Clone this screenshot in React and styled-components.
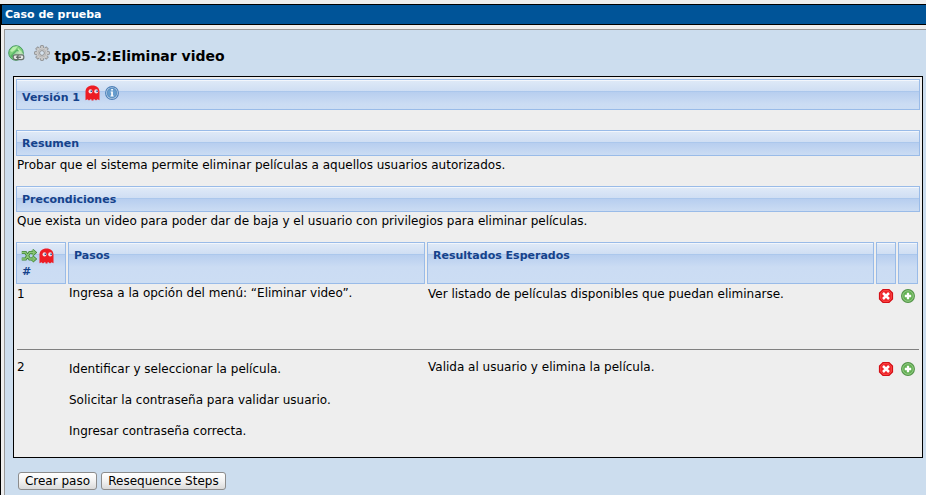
import React from "react";
import styled, { createGlobalStyle, css } from "styled-components";

const GlobalStyle = createGlobalStyle`
  * { box-sizing: border-box; }
  html, body { margin: 0; height: 100%; overflow: hidden; }
  body {
    background: #eee;
    color: #000;
    font: 12px/15px "DejaVu Sans", Verdana, sans-serif;
  }
  svg { display: block; flex: none; }
`;

const Page = styled.main`
  width: 926px;
  height: 495px;
  padding-top: 4px;
  overflow: hidden;
`;

const Frame = styled.div`
  height: 491px;
  border-left: 1px solid #000;
`;

const TitleBar = styled.h1`
  height: 21px;
  margin: 0;
  padding-left: 3px;
  border: solid #000;
  border-width: 1px 0 1px 1px;
  background: #005498;
  color: #fff;
  font-size: 11px;
  line-height: 19px;
`;

const Workspace = styled.section`
  height: 466px;
  margin: 4px 0 0 3px;
  border: solid #999;
  border-width: 1px 0 0 1px;
  background: #cde;
`;

const CaseHeading = styled.header`
  display: flex;
  height: 46px;
  padding: 15px 0 0 3px;
`;

const CaseName = styled.h2`
  margin: 3px 0 0 4.5px;
  font-size: 14px;
  line-height: 17px;
`;

const GearSlot = styled.span`
  margin-left: 9px;
`;

const CasePanel = styled.article`
  width: 910px;
  height: 382px;
  margin-left: 8px;
  padding: 2px;
  border: 1px solid #000;
  background: #eee;
`;

const barSurface = css`
  border: 1px solid #99bbe8;
  color: #15428b;
  font-size: 11px;
  font-weight: bold;
  background: linear-gradient(
    #f2f6fc 0 1px, #dee9f7 1px, #cfdef3 11px, #abc7ec 11px 12px,
    #b7ceef 12px, #cbdcf3 24px, #ccddf3 100%
  );
`;

const SectionBar = styled.h3`
  ${barSurface}
  display: flex;
  width: 904px;
  height: ${(p) => (p.$tall ? 31 : 26)}px;
  margin: ${(p) => p.$before || 0}px 0 0;
  padding: ${(p) => (p.$tall ? 10 : 5)}px 0 0 5px;
  line-height: 15px;
`;

const BarIcons = styled.span`
  display: flex;
  gap: 5px;
  margin: -5px 0 0 5px;
`;

const Description = styled.p`
  height: 15px;
  margin: 2px 0 0 1px;
`;

const StepGrid = styled.div`
  display: grid;
  width: 902px;
  grid-template-columns: 50px 357px 447px 20px 20px;
  column-gap: 2px;
`;

const StepHead = styled(StepGrid)`
  height: 42px;
  margin-top: 13px;
`;

const HeadCell = styled.div`
  ${barSurface}
  padding: 5px 0 0 5px;
  line-height: 15px;
`;

const HeadIcons = styled.div`
  display: flex;
  gap: 2px;
  height: 16px;
  margin-left: -1px;
`;

const StepRow = styled(StepGrid)`
  height: ${(p) => p.$height}px;
`;

const StepCell = styled.div`
  padding: ${(p) => p.$top}px 0 0 1px;
`;

const ActionCell = styled.div`
  padding: ${(p) => p.$top}px 0 0 2px;
`;

const Action = styled.button`
  display: block;
  padding: 0;
  border: 0;
  background: none;
`;

const Paragraph = styled.p`
  margin: 0 0 16px;
`;

const Divider = styled.hr`
  height: 1px;
  width: 902px;
  margin: 0 0 0 1px;
  border: 0;
  background: #808080;
`;

const ButtonRow = styled.footer`
  display: flex;
  gap: 4px;
  padding: 14px 0 0 13px;
`;

const PushButton = styled.button`
  width: ${(p) => p.$width}px;
  height: 18px;
  padding: 0;
  border: 1px solid #8c8c8c;
  border-radius: 3px;
  background: linear-gradient(#fff, #f2f2f2 50%, #dadada);
  color: #000;
  font: 12px/15px "DejaVu Sans", sans-serif;
`;

const GlobeLink = () => (
  <svg width="17" height="17" viewBox="0 0 17 17">
    <circle cx="8" cy="8" r="7.3" fill="#7fd07c" stroke="#489c62" />
    <path d="M2 6 5 2 10 1 7 5 4 7zM10 3l4 4-1 3-4-3z" fill="#b9efae" />
    <path d="M2 11 9 4l2 2-7 7z" fill="#56b466" />
    <path d="M5 14V10l4-4 6 2v6z" fill="#bfe0bd" opacity=".75" />
    <rect x="5.2" y="9.8" width="6.2" height="4.8" rx="2" fill="#e6e6e6" stroke="#68736c" strokeWidth="1.2" />
    <rect x="9.6" y="9.8" width="6.2" height="4.8" rx="2" fill="#e6e6e6" stroke="#68736c" strokeWidth="1.2" />
    <path d="M8 12.2h5" stroke="#59645f" strokeWidth="1.3" />
  </svg>
);

const Gear = () => (
  <svg width="16" height="16" viewBox="0 0 16 16">
    {[0, 45, 90, 135].map((a) => (
      <rect key={a} x="6.4" y="0.5" width="3.2" height="15" rx="1" fill="#c4c4c4" stroke="#858585" strokeWidth=".9" transform={`rotate(${a} 8 8)`} />
    ))}
    <circle cx="8" cy="8" r="5.5" fill="#cfcfcf" />
    <circle cx="8" cy="8" r="4" fill="none" stroke="#b8b8b8" />
    <circle cx="8" cy="8" r="2.4" fill="#d5e2ee" stroke="#8b8b8b" strokeWidth=".9" />
  </svg>
);

const Ghost = () => (
  <svg width="15" height="16" viewBox="0 0 15 16">
    <path d="M.5 15.2V7C.5 2.8 3.4.5 7.5.5S14.5 2.8 14.5 7v8.2l-2-1-1.5 1.2L9.5 14.2h-1v1.2h-2v-1.2h-1L4 15.4 2.5 14.2z" fill="#ed1c24" />
    <ellipse cx="5.5" cy="6.4" rx="2" ry="2.1" fill="#f5dde1" />
    <ellipse cx="11.2" cy="6.4" rx="2" ry="2.1" fill="#f5dde1" />
    <path d="M5.6 5.5h1.5v1.6H5.6zM11.4 5.5h1.5v1.6h-1.5z" fill="#26579b" />
  </svg>
);

const Info = () => (
  <svg width="14" height="16" viewBox="0 0 14 16">
    <circle cx="7" cy="8" r="6.4" fill="#d7e5f4" stroke="#4b7fb7" strokeWidth="1.1" />
    <circle cx="7" cy="8" r="4.9" fill="#659ccd" stroke="#487eb5" strokeWidth=".7" />
    <path d="M6.2 4h1.7v1.5H6.2zM5.6 6.5h2.3v4h.7v1H5.5v-1h.7v-3h-.6z" fill="#fff" />
  </svg>
);

const Shuffle = () => (
  <svg width="16" height="16" viewBox="0 0 16 16">
    {["#428537", "#8bc879"].map((color, i) => (
      <g key={color} fill="none" stroke={color} strokeWidth={i ? 1.3 : 3}>
        <path d="M.8 4.5h3.7L8.7 11H13M.8 11h3.7l4.2-6.5H13" />
        <path d="m11.3 2 2.8 2.5L11.3 7M11.3 8.5l2.8 2.5-2.8 2.5" />
      </g>
    ))}
  </svg>
);

const Remove = () => (
  <svg width="16" height="16" viewBox="0 0 16 16">
    <path d="M5 1.5h6L14.5 5v6L11 14.5H5L1.5 11V5z" fill="#ee2228" stroke="#d40f16" strokeWidth="1.2" />
    <path d="M5.5 2.7h5l2.8 2.8v5l-2.8 2.8h-5l-2.8-2.8v-5z" fill="none" stroke="#ff5a55" strokeWidth=".7" />
    <path d="m5 5 6 6m0-6-6 6" stroke="#fff" strokeWidth="2.5" />
  </svg>
);

const Add = () => (
  <svg width="16" height="16" viewBox="0 0 16 16">
    <circle cx="8" cy="8" r="6.4" fill="#62b052" stroke="#54944a" strokeWidth="1.1" />
    <circle cx="8" cy="8" r="5.3" fill="none" stroke="#9acd8b" strokeWidth=".9" />
    <path d="M8 4.8v6.4M4.8 8h6.4" stroke="#fff" strokeWidth="2.3" />
  </svg>
);

const StepActions = ({ top }) => (
  <>
    <ActionCell $top={top}><Action aria-label="Eliminar paso"><Remove /></Action></ActionCell>
    <ActionCell $top={top}><Action aria-label="Añadir paso"><Add /></Action></ActionCell>
  </>
);

export default function App() {
  return (
    <Page>
      <GlobalStyle />
      <Frame>
        <TitleBar>Caso de prueba</TitleBar>
        <Workspace>
          <CaseHeading>
            <GlobeLink />
            <GearSlot><Gear /></GearSlot>
            <CaseName>tp05-2:Eliminar video</CaseName>
          </CaseHeading>
          <CasePanel>
            <SectionBar $tall>
              Versión 1
              <BarIcons><Ghost /><Info /></BarIcons>
            </SectionBar>
            <SectionBar $before={20}>Resumen</SectionBar>
            <Description>Probar que el sistema permite eliminar películas a aquellos usuarios autorizados.</Description>
            <SectionBar $before={13}>Precondiciones</SectionBar>
            <Description>Que exista un video para poder dar de baja y el usuario con privilegios para eliminar películas.</Description>
            <StepHead>
              <HeadCell>
                <HeadIcons><Shuffle /><Ghost /></HeadIcons>
                #
              </HeadCell>
              <HeadCell>Pasos</HeadCell>
              <HeadCell>Resultados Esperados</HeadCell>
              <HeadCell />
              <HeadCell />
            </StepHead>
            <StepRow $height={65}>
              <StepCell $top={3}>1</StepCell>
              <StepCell $top={2}>Ingresa a la opción del menú: “Eliminar video”.</StepCell>
              <StepCell $top={3}>Ver listado de películas disponibles que puedan eliminarse.</StepCell>
              <StepActions top={4} />
            </StepRow>
            <Divider />
            <StepRow $height={100}>
              <StepCell $top={10}>2</StepCell>
              <StepCell $top={12}>
                <Paragraph>Identificar y seleccionar la película.</Paragraph>
                <Paragraph>Solicitar la contraseña para validar usuario.</Paragraph>
                <Paragraph>Ingresar contraseña correcta.</Paragraph>
              </StepCell>
              <StepCell $top={10}>Valida al usuario y elimina la película.</StepCell>
              <StepActions top={11} />
            </StepRow>
          </CasePanel>
          <ButtonRow>
            <PushButton $width={79}>Crear paso</PushButton>
            <PushButton $width={125}>Resequence Steps</PushButton>
          </ButtonRow>
        </Workspace>
      </Frame>
    </Page>
  );
}
